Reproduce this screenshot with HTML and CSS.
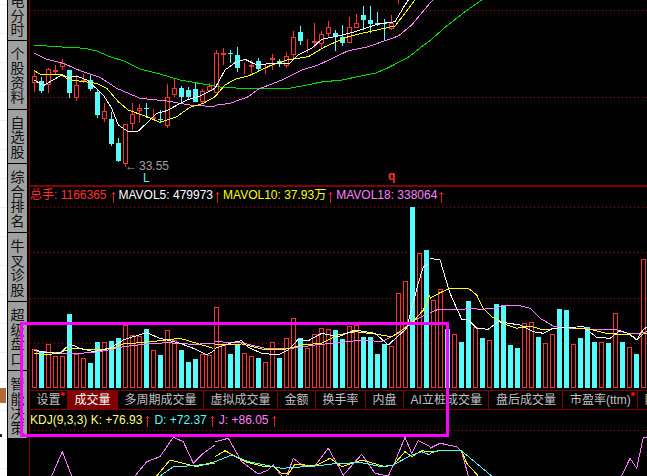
FILE: index.html
```html
<!DOCTYPE html>
<html lang="zh-CN">
<head>
  <meta charset="UTF-8">
  <title>成交量</title>
  <link rel="stylesheet" href="styles.css">
</head>
<body>
  <div class="app">
    <div class="strip">
      <div class="strip-icon"></div>
      <div class="strip-dot"></div>
    </div>
    <nav class="side">
      <div class="side-tab">电分时</div>
      <div class="side-tab">个股资料</div>
      <div class="side-tab">自选股</div>
      <div class="side-tab">综合排名</div>
      <div class="side-tab">牛叉诊股</div>
      <div class="side-tab">超级盘口</div>
      <div class="side-tab">智能决策</div>
    </nav>
    <main class="main">
      <div class="price">
        <svg id="price-chart" class="chart" width="617" height="185" viewBox="30 0 617 185"></svg>
        <div class="low-label"><span>←</span><span>33.55</span></div>
        <span class="mark-l">L</span>
        <span class="mark-q">q</span>
      </div>
      <div class="legend">
        <span class="red">总手: 1166365</span><svg class="up" width="5" height="11" viewBox="0 0 5 11"><path d="M2.5 0V11M0.5 2.5L2.5 0.5L4.5 2.5"/></svg>
        <span class="white">MAVOL5: 479973</span><svg class="up" width="5" height="11" viewBox="0 0 5 11"><path d="M2.5 0V11M0.5 2.5L2.5 0.5L4.5 2.5"/></svg>
        <span class="yellow">MAVOL10: 37.93万</span><svg class="up" width="5" height="11" viewBox="0 0 5 11"><path d="M2.5 0V11M0.5 2.5L2.5 0.5L4.5 2.5"/></svg>
        <span class="pink">MAVOL18: 338064</span><svg class="up" width="5" height="11" viewBox="0 0 5 11"><path d="M2.5 0V11M0.5 2.5L2.5 0.5L4.5 2.5"/></svg>
      </div>
      <svg id="volume-chart" class="chart" width="617" height="185" viewBox="30 205 617 185"></svg>
      <div class="tabs">
        <div class="tab">设置<b class="dot"></b></div>
        <div class="tab active">成交量</div>
        <div class="tab">多周期成交量</div>
        <div class="tab">虚拟成交量</div>
        <div class="tab">金额</div>
        <div class="tab">换手率</div>
        <div class="tab">内盘</div>
        <div class="tab">AI立桩成交量</div>
        <div class="tab">盘后成交量</div>
        <div class="tab">市盈率(ttm)<b class="dot"></b></div>
        <div class="tab">阶段成交量</div>
      </div>
      <div class="legend legend-kdj">
        <span class="cream">KDJ(9,3,3) K: +76.93</span><svg class="up" width="5" height="11" viewBox="0 0 5 11"><path d="M2.5 0V11M0.5 2.5L2.5 0.5L4.5 2.5"/></svg>
        <span class="cyan">D: +72.37</span><svg class="up" width="5" height="11" viewBox="0 0 5 11"><path d="M2.5 0V11M0.5 2.5L2.5 0.5L4.5 2.5"/></svg>
        <span class="pink">J: +86.05</span><svg class="up" width="5" height="11" viewBox="0 0 5 11"><path d="M2.5 0V11M0.5 2.5L2.5 0.5L4.5 2.5"/></svg>
      </div>
      <svg id="kdj-chart" class="chart" width="617" height="46" viewBox="30 430 617 46"></svg>
    </main>
  </div>
  <div class="highlight"></div>
  <script src="chart.js"></script>
</body>
</html>
```
FILE: styles.css
```css
html, body {
  margin: 0;
  height: 100%;
  overflow: hidden;
  background: #000;
}
.app {
  display: flex;
  height: 476px;
  font-family: "Liberation Sans", "Noto Sans CJK SC", sans-serif;
  font-size: 12px;
}
.strip {
  position: relative;
  width: 7px;
  flex: none;
  background: linear-gradient(#eaf0f6 1px, #fff 1px) 0 4px / 7px 29px;
}
.strip-icon {
  position: absolute;
  left: 0;
  top: 388px;
  width: 6px;
  height: 15px;
  background: #b06a3a;
}
.strip-dot {
  position: absolute;
  left: 0;
  top: 434px;
  width: 2px;
  height: 3px;
  background: #223;
}
.side {
  width: 22px;
  flex: none;
  box-sizing: border-box;
  height: 450px;
  margin-top: -12px;
  border-left: 1px solid #000;
  overflow: hidden;
}
.side-tab {
  width: 14px;
  padding: 5px 2.5px;
  border-bottom: 1px solid #000;
  margin-right: 2px;
  background: #a0a0a0;
  color: #111;
  font-family: "Noto Sans CJK SC", sans-serif;
  font-size: 14px;
  line-height: 14.5px;
  text-align: center;
}
.side-tab:first-child {
  padding-bottom: 3px;
}
.main {
  width: 618px;
  flex: none;
  border-left: 1px solid #800000;
  background: #000;
}
.chart {
  display: block;
}
.price {
  position: relative;
  height: 185px;
  border-bottom: 2px solid #800000;
}
.low-label {
  position: absolute;
  left: 95px;
  top: 160px;
  display: flex;
  gap: 2px;
  color: #a0a0a0;
  line-height: 12px;
}
.mark-l {
  position: absolute;
  left: 113px;
  top: 173px;
  color: #54fcfc;
  line-height: 11px;
}
.mark-q {
  position: absolute;
  left: 358px;
  top: 169px;
  color: #ff3232;
  font-weight: bold;
}
.legend {
  display: flex;
  gap: 3px;
  height: 18px;
  line-height: 17px;
  white-space: nowrap;
}
.legend-kdj {
  gap: 4px;
  height: 20px;
  line-height: 20px;
}
.up {
  flex: none;
  margin: 5px 0 0 -1px;
  fill: none;
  stroke: #e02020;
  stroke-width: 1;
}
.legend-kdj .up {
  margin-top: 6px;
}
.red {
  color: #ff3232;
  padding-right: 2px;
}
.white { color: #fff; }
.yellow { color: #ffff00; }
.pink { color: #ff80ff; }
.cream { color: #ffff80; }
.cyan { color: #54fcfc; }
.tabs {
  display: flex;
  height: 18px;
  border-top: 1px solid #800000;
  border-bottom: 1px solid #800000;
  overflow: hidden;
  white-space: nowrap;
}
.tab {
  position: relative;
  flex: none;
  padding: 0 6.5px;
  border-right: 1px solid #800000;
  color: #c0c0c0;
  line-height: 18px;
}
.tab.active {
  background: #800000;
  color: #fff;
}
.dot {
  position: absolute;
  top: 1px;
  right: 2px;
  width: 4px;
  height: 4px;
  border-radius: 50%;
  background: #ff0000;
}
.highlight {
  position: absolute;
  left: 20px;
  top: 322px;
  width: 423px;
  height: 109px;
  border: 3px solid #ff00ff;
}
```
FILE: chart.js
```js
// everything below was traced off a 3x enlargement, so coordinates get divided by 3
const RED = "#ff3232", CYAN = "#54fcfc", PINK = "#ff80ff", YELLOW = "#ffff00", WHITE = "#ffffff", GREEN = "#00e000";
const NS = "http://www.w3.org/2000/svg";

function add(svg, tag, attrs) {
  const el = document.createElementNS(NS, tag);
  for (const k in attrs) el.setAttribute(k, attrs[k]);
  svg.appendChild(el);
}

function dotted(svg, y) {
  add(svg, "line", { x1: 30, x2: 647, y1: y + 0.5, y2: y + 0.5, stroke: "#a00000", "stroke-dasharray": "1 3" });
}

// ox, oy: page offset of the enlarged crop
function trace(svg, color, ox, oy, pts) {
  const p = pts.map(([x, y]) => (ox + x / 3).toFixed(1) + "," + (oy + y / 3).toFixed(1)).join(" ");
  add(svg, "polyline", { points: p, fill: "none", stroke: color, "stroke-width": 1, "shape-rendering": "crispEdges" });
}

function barX(i) {
  return 34 + 7 * i;
}

function box(svg, i, top, bottom, color) {
  const x = barX(i);
  if (color === CYAN) {
    add(svg, "rect", { x: x - 2, y: top, width: 5, height: bottom - top, fill: CYAN, "shape-rendering": "crispEdges" });
  } else {
    add(svg, "rect", { x: x - 1.5, y: top + 0.5, width: 4, height: bottom - top - 1, fill: "#000", stroke: RED, "shape-rendering": "crispEdges" });
  }
}

/* price panel */
const price = document.getElementById("price-chart");
dotted(price, 10);
dotted(price, 97);

// wick top, wick bottom, body top, body bottom (3x), r/c
const candles = [
  [210,275,228,250,"r"],[232,278,243,273,"c"],[205,280,207,255,"r"],[195,225,210,216,"r"],[178,210,188,200,"r"],
  [210,293,210,278,"c"],[225,302,255,293,"r"],[222,250,240,246,"r"],[225,272,240,267,"c"],[270,355,277,345,"c"],
  [308,365,333,357,"r"],[335,437,357,432,"c"],[415,487,430,482,"c"],[372,500,372,492,"r"],[310,390,343,373,"r"],
  [312,365,325,332,"r"],[310,355,323,328,"c"],[327,360,351,357,"r"],[330,368,356,361,"c"],[252,385,290,377,"r"],
  [233,290,265,285,"r"],[258,305,265,290,"c"],[262,298,270,290,"c"],[248,305,267,305,"c"],[268,310,273,305,"r"],
  [248,275,258,272,"r"],[150,280,160,278,"r"],[145,195,160,166,"r"],[150,190,158,163,"c"],[140,215,165,205,"c"],
  [190,222,203,208,"r"],[180,220,195,200,"r"],[175,215,183,207,"c"],[195,222,203,208,"r"],[162,210,174,179,"r"],
  [178,200,182,192,"c"],[155,205,168,198,"r"],[92,180,112,165,"r"],[78,135,97,123,"c"],[118,160,128,133,"r"],
  [70,145,123,128,"r"],[93,148,102,132,"r"],[62,115,82,102,"r"],[90,152,99,108,"c"],[75,138,112,130,"c"],
  [50,130,82,130,"r"],[42,85,70,84,"r"],[17,90,45,60,"c"],[17,100,60,72,"c"],[37,78,70,76,"c"],
  [58,122,70,73,"c"],[45,90,68,86,"r"],[0,12,0,0,"r"]
];
candles.forEach((c, i) => {
  const x = barX(i), color = c[4] === "c" ? CYAN : RED;
  add(price, "line", { x1: x + 0.5, x2: x + 0.5, y1: c[0] / 3, y2: c[1] / 3, stroke: color, "shape-rendering": "crispEdges" });
  if (c[3] > c[2]) box(price, i, Math.round(c[2] / 3), Math.round(c[3] / 3), color === CYAN ? CYAN : RED);
});

trace(price, GREEN, 0, 0, [[103,135],[140,138],[200,142],[255,145],[290,153],[330,170],[375,184],[420,207],[480,222],[540,240],[645,258]]);
trace(price, GREEN, 215, 0, [[0,260],[78,265],[222,265],[260,258],[330,244],[370,242],[420,232],[480,220],[520,203],[580,172],[620,140],[645,122],[690,82],[750,35],[800,0]]);
trace(price, PINK, 0, 0, [[103,160],[140,178],[190,190],[240,212],[300,232],[350,265],[420,295],[500,303],[570,315],[645,320]]);
trace(price, PINK, 215, 0, [[0,316],[45,310],[100,290],[130,268],[200,240],[260,210],[310,195],[400,152],[460,140],[510,122],[550,108],[590,75],[640,15],[654,0]]);
trace(price, YELLOW, 0, 0, [[103,212],[120,222],[190,225],[215,240],[290,250],[320,265],[355,305],[385,330],[440,350],[480,367],[530,350],[570,322],[610,310],[645,290]]);
trace(price, YELLOW, 215, 0, [[0,290],[30,255],[60,238],[100,228],[170,195],[215,180],[280,170],[330,140],[400,110],[440,100],[540,78],[570,40],[600,0]]);
trace(price, WHITE, 0, 0, [[103,240],[130,257],[150,245],[185,225],[200,235],[230,228],[260,240],[285,262],[310,285],[335,325],[355,375],[385,395],[415,393],[445,365],[470,340],[500,332],[560,300],[600,288],[645,265]]);
trace(price, WHITE, 215, 0, [[0,265],[30,210],[60,188],[90,178],[125,195],[175,190],[225,190],[250,165],[290,145],[320,118],[360,110],[420,95],[490,72],[540,65],[570,15],[580,0]]);

/* volume panel */
const volume = document.getElementById("volume-chart");
[207, 252, 298, 343].forEach(y => dotted(volume, y));

// top of each bar in page pixels, negative = falling (cyan)
const bars = [
  349,-352,344,356,356,-314,354,358,-363,-342,342,-341,-338,325,335,336,-329,350,-355,330,340,-350,-362,-359,354,355,
  307,345,-354,-344,353,356,-358,362,342,-358,338,318,-338,348,334,328,329,-330,-339,326,325,-337,-337,-354,-344,346,
  293,281,-207,253,-250,300,289,-329,334,-342,-301,327,-338,340,-304,-306,-345,-348,323,322,-337,343,334,-309,-310,
  344,-338,-327,-342,342,-343,313,-342,347,-354,259
];
bars.forEach((b, i) => box(volume, i, Math.abs(b), 388, b < 0 ? CYAN : RED));

trace(volume, PINK, 0, 320, [[103,92],[180,100],[240,100],[300,95],[370,80],[440,72],[500,68],[580,73],[645,70]]);
trace(volume, PINK, 215, 320, [[0,65],[80,68],[150,85],[230,85],[300,75],[380,67],[440,60],[500,65],[550,40],[590,5],[640,-20]]);
trace(volume, PINK, 430, 180, [[0,398],[25,388],[100,388],[120,385],[150,388],[200,385],[215,377],[270,377],[300,385],[330,415],[370,438],[420,445],[480,447],[520,448],[560,450],[600,462],[640,458],[650,455]]);
trace(volume, YELLOW, 0, 320, [[103,100],[140,105],[180,97],[220,85],[280,90],[340,85],[370,72],[420,68],[480,62],[540,55],[590,70],[640,85]]);
trace(volume, YELLOW, 215, 320, [[0,75],[80,72],[140,87],[200,90],[260,75],[320,70],[370,45],[420,35],[480,42],[530,50],[570,25],[590,10],[625,-30],[645,-75]]);
trace(volume, YELLOW, 430, 180, [[0,355],[30,338],[60,325],[115,325],[140,345],[160,385],[185,410],[230,435],[260,445],[300,438],[340,450],[400,442],[480,448],[530,460],[600,465],[620,480],[640,462],[650,460]]);
trace(volume, WHITE, 0, 320, [[103,90],[140,98],[180,100],[210,72],[240,85],[280,95],[330,85],[370,60],[400,50],[440,38],[480,55],[540,70],[580,85],[620,105],[645,90]]);
trace(volume, WHITE, 215, 320, [[0,85],[50,68],[80,62],[100,82],[140,100],[190,105],[220,90],[250,58],[280,62],[320,40],[370,50],[420,30],[480,40],[520,75],[575,25],[590,-35],[610,-110],[625,-160],[640,-168]]);
trace(volume, WHITE, 430, 180, [[0,235],[30,240],[45,290],[60,340],[95,418],[115,420],[140,445],[175,448],[205,425],[270,435],[310,455],[340,460],[370,445],[420,442],[460,440],[500,472],[540,475],[570,452],[600,462],[620,480],[640,448],[650,442]]);

/* kdj panel */
const kdj = document.getElementById("kdj-chart");
dotted(kdj, 430);

trace(kdj, PINK, 0, 320, [[155,468],[187,395],[215,468]]);
trace(kdj, PINK, 0, 320, [[405,468],[440,425],[480,410],[520,352],[550,365],[580,430],[610,400],[645,375]]);
trace(kdj, PINK, 215, 320, [[0,365],[40,355],[80,425],[130,462],[160,450],[175,435],[200,468],[215,468],[235,415],[260,435],[300,438],[340,385],[385,465],[440,403],[480,460],[520,468],[540,425],[570,352],[590,400],[610,362],[645,380]]);
trace(kdj, PINK, 430, 320, [[0,385],[30,370],[80,380],[95,395],[115,468]]);
trace(kdj, PINK, 430, 320, [[575,468],[600,415],[620,445],[640,352],[650,352]]);
trace(kdj, YELLOW, 0, 320, [[470,468],[510,420],[550,430],[590,440],[645,425]]);
trace(kdj, YELLOW, 215, 320, [[0,410],[30,392],[90,425],[150,440],[175,440],[200,460],[220,462],[240,432],[300,438],[345,415],[380,440],[440,420],[510,440],[535,435],[570,395],[590,410],[620,392],[645,395]]);
trace(kdj, YELLOW, 430, 320, [[0,400],[30,390],[95,392],[110,430],[145,468]]);
trace(kdj, CYAN, 0, 320, [[480,468],[520,440],[580,437],[645,430]]);
trace(kdj, CYAN, 215, 320, [[0,425],[50,405],[100,425],[200,445],[300,438],[370,430],[440,428],[500,440],[535,435],[590,405],[620,395],[645,405]]);
trace(kdj, CYAN, 430, 320, [[0,395],[60,390],[95,393],[185,468]]);
```
